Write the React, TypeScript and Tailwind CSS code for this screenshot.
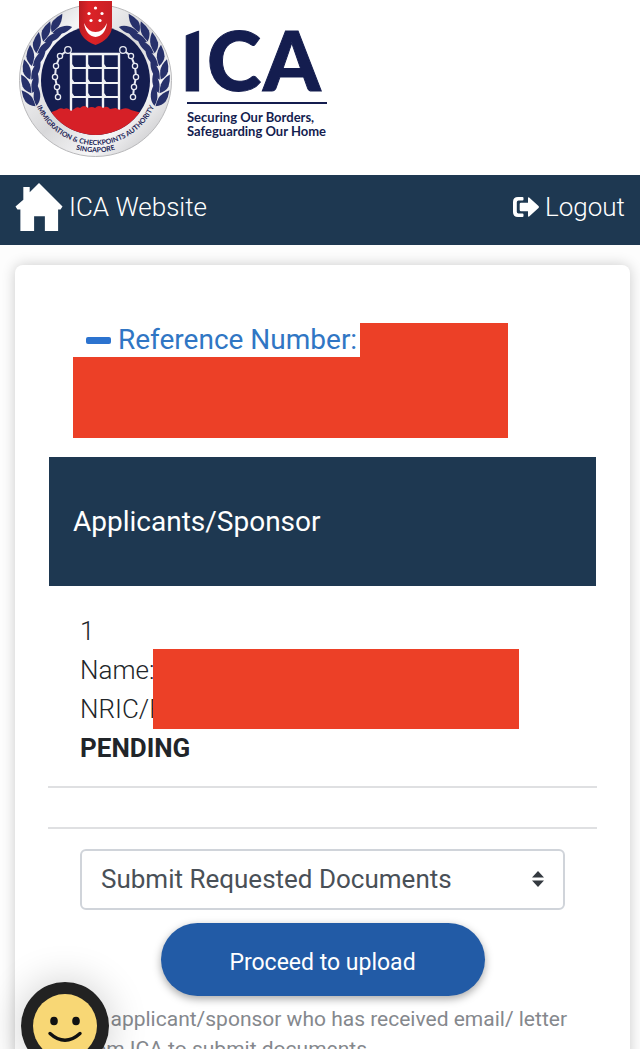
const LEAF_ANGLES = [-21, -9, 3, 15, 27, 39, 50];

const CHAIN_RINGS = [
  [68, 50],
  [60, 56],
  [56, 66],
  [55, 77],
  [57, 87],
  [58, 97],
];

const BAR_XS = [71, 87, 103, 119];
const RAIL_YS = [68, 83, 97];

function Laurel() {
  return (
    <g fill="#27316b">
      {LEAF_ANGLES.map((angle) => (
        <g key={angle} transform={`rotate(${angle} 95.5 80.5)`}>
          <path d="M30.300 83 Q24 80 22.500 75 Q21.500 70 23 63 Q29 68 30.300 74 Q31 79 30.300 83Z" />
          <path d="M31.300 83 Q30.500 76 32.500 72 Q35 66 39.500 64 Q40.500 71 38 76 Q35.500 81 31.300 83Z" />
        </g>
      ))}
    </g>
  );
}

function Chain() {
  return (
    <g fill="none" stroke="#e8eaf2">
      <polyline
        points={CHAIN_RINGS.map((p) => p.join(",")).join(" ")}
        strokeWidth="2"
      />
      {CHAIN_RINGS.map(([x, y], i) => (
        <circle key={y} cx={x} cy={y} r={i === 0 ? 3.3 : 2.6} fill="#141d4f" strokeWidth="1.3" />
      ))}
    </g>
  );
}

function Crest() {
  return (
    <svg viewBox="0 0 176 160" className="h-40 w-44 shrink-0" role="img" aria-label="Immigration and Checkpoints Authority crest">
      <defs>
        <linearGradient id="silver" x1="0" y1="0" x2="1" y2="1">
          <stop offset="0" stopColor="#c4c4c6" />
          <stop offset="0.25" stopColor="#f4f4f5" />
          <stop offset="0.5" stopColor="#d8d8da" />
          <stop offset="0.72" stopColor="#f6f6f7" />
          <stop offset="1" stopColor="#b4b4b7" />
        </linearGradient>
        <linearGradient id="shield" x1="0" y1="0" x2="1" y2="0">
          <stop offset="0" stopColor="#b81c22" />
          <stop offset="0.3" stopColor="#dd2227" />
          <stop offset="1" stopColor="#c92025" />
        </linearGradient>
        <clipPath id="disc">
          <circle cx="95.500" cy="80.500" r="54.500" />
        </clipPath>
        <path id="arc-upper" d="M37 107 A64 64 0 0 0 154 107" />
        <path id="arc-lower" d="M50 136 A71.500 71.500 0 0 0 141 136" />
      </defs>
      <circle cx="95.500" cy="80.500" r="76" fill="url(#silver)" stroke="#b9b9bb" strokeWidth="1" />
      <Laurel />
      <g transform="translate(191 0) scale(-1 1)">
        <Laurel />
      </g>
      <circle cx="95.500" cy="80.500" r="54.500" fill="#141d4f" />
      <g stroke="#f1f2f6" strokeWidth="2.400" fill="none">
        <path d="M70 54H120" />
        {BAR_XS.map((x) => (
          <path key={x} d={`M${x} 53V112`} />
        ))}
        {RAIL_YS.map((y) => (
          <path key={y} d={`M71 ${y}H119`} strokeWidth="1.800" />
        ))}
        {RAIL_YS.map((y) =>
          BAR_XS.slice(0, 3).map((x) => (
            <path key={`${x}-${y}`} d={`M${x} ${y - 4}L${x + 3} ${y}`} strokeWidth="1.500" />
          )),
        )}
      </g>
      <Chain />
      <g transform="translate(191 0) scale(-1 1)">
        <Chain />
      </g>
      <path
        clipPath="url(#disc)"
        fill="#d62027"
        d="M38 118 Q48 113 57 110 Q60 107 64 109 Q68 107 71 111 L74 109 Q77 106 80 108 Q84 104 88 108 Q92 106 95 108 Q99 104 103 108 Q107 105 110 109 L116 108 Q119 111 122 109 Q127 107 131 110 Q142 112 153 119 V140 H38Z"
      />
      <path d="M79 1H112V27Q111 39 95.500 45Q80 39 79 27Z" fill="url(#shield)" />
      <path d="M84 23Q86 36 95.500 37Q105 36 107 23Q103 32 95.500 32Q88 32 84 23Z" fill="#fff" />
      <g fill="#fff">
        <circle cx="95.500" cy="8" r="1.600" />
        <circle cx="89" cy="13.500" r="1.600" />
        <circle cx="102" cy="13.500" r="1.600" />
        <circle cx="91" cy="20.500" r="1.600" />
        <circle cx="100" cy="20.500" r="1.600" />
      </g>
      <g className="font-['Lato',sans-serif] font-bold" fill="#1b2355" textAnchor="middle">
        <text fontSize="7">
          <textPath href="#arc-upper" startOffset="50%">
            IMMIGRATION &amp; CHECKPOINTS AUTHORITY
          </textPath>
        </text>
        <text fontSize="7">
          <textPath href="#arc-lower" startOffset="50%">
            SINGAPORE
          </textPath>
        </text>
      </g>
    </svg>
  );
}

function Wordmark() {
  return (
    <svg viewBox="0 0 156 160" className="h-40 w-39 shrink-0" fill="#141d4f" role="img" aria-label="ICA, Securing Our Borders, Safeguarding Our Home">
      <g className="font-['Lato',sans-serif]">
        <text x="4 31 87" y="91" fontSize="82" fontWeight="900" stroke="#141d4f" strokeWidth="1">
          ICA
        </text>
        <rect x="11" y="102" width="140" height="2" />
        <g fontSize="13" fontWeight="700">
          <text x="11" y="122">Securing Our Borders,</text>
          <text x="11" y="136">Safeguarding Our Home</text>
        </g>
      </g>
      <path d="M8 28H24V30L8 36Z" fill="#fff" />
    </svg>
  );
}

function HouseIcon() {
  return (
    <svg viewBox="0 0 48 49" className="h-12 w-12 shrink-0" fill="#fff" aria-hidden="true">
      <path d="M24 0 L48 24 L46 27 H43.500 V49 H30 V34 H19 V49 H5 V27 H2 L0 24 L8 17 V4 H14.500 V9.500Z" />
    </svg>
  );
}

function LogoutIcon() {
  return (
    <svg viewBox="0 0 26 20" className="h-5 w-[26px] shrink-0" fill="#fff" aria-hidden="true">
      <path d="M5 0H9.500Q10.500 0 10.500 1V2.500Q10.500 3.500 9.500 3.500H5.500Q3.800 3.500 3.800 5.200V14.800Q3.800 16.500 5.500 16.500H9.500Q10.500 16.500 10.500 17.500V19Q10.500 20 9.500 20H5Q0 20 0 15V5Q0 0 5 0Z" />
      <path d="M15 1.500Q15 -0.500 16.700 0.900L25.500 9Q26.400 10 25.500 11L16.700 19.100Q15 20.500 15 18.500V14.300H8Q6.700 14.300 6.700 13V7Q6.700 5.700 8 5.700H15Z" />
    </svg>
  );
}

function Smiley() {
  return (
    <svg viewBox="0 0 88 88" className="size-22" aria-hidden="true">
      <circle cx="44" cy="44" r="44" fill="#222" />
      <circle cx="44" cy="44" r="32" fill="#f8d775" />
      <ellipse cx="33" cy="39" rx="3.800" ry="4.300" fill="#111" />
      <ellipse cx="55" cy="39" rx="3.800" ry="4.300" fill="#111" />
      <path d="M29 51.500Q44 65 59 51.500" fill="none" stroke="#111" strokeWidth="3.400" strokeLinecap="round" />
    </svg>
  );
}

export default function App() {
  return (
    <div className="flex h-screen flex-col overflow-hidden bg-[#fdfdfd] font-['Roboto',sans-serif] text-[#212529]">
      <header className="flex h-[175px] shrink-0 items-start bg-white">
        <Crest />
        <Wordmark />
      </header>

      <nav className="flex h-[70px] shrink-0 items-center justify-between bg-[#1e3851] px-[15px] pb-1.5 text-[26px] font-light text-white">
        <a href="#home" className="flex items-center gap-1.5">
          <HouseIcon />
          <span>ICA Website</span>
        </a>
        <a href="#logout" className="flex items-center gap-1.5">
          <LogoutIcon />
          Logout
        </a>
      </nav>

      <main className="mr-[10px] ml-[15px] mt-5 shrink-0 rounded-lg bg-white px-[34px] pt-[58px] pb-10 shadow-[0_0_14px_rgba(0,0,0,0.2)]">
        <section className="ml-6">
          <h1 className="flex h-[34px] items-center text-[28px] text-[#3076c4]">
            <span className="mr-[7px] ml-[13px] h-[7px] w-[25px] rounded-xs bg-[#2c73cf]" />
            <span className="w-[242px] whitespace-nowrap">Reference Number:</span>
            <span className="h-full w-[148px] bg-[#ec4027]" />
          </h1>
          <div className="h-[81px] w-[435px] bg-[#ec4027]" />
        </section>

        <h2 className="mt-[19px] flex h-[129px] items-center bg-[#1e3851] px-6 text-[28px] text-white">
          Applicants/Sponsor
        </h2>

        <section className="px-[31px] pt-[26px] pb-[18px] text-[26px] leading-[39px] font-light">
          <p>1</p>
          <div className="flex">
            <div className="w-[73px] overflow-hidden whitespace-nowrap">
              <p>Name:</p>
              <p>NRIC/F</p>
            </div>
            <div className="-mt-[2px] w-[366px] bg-[#ec4027]" />
          </div>
          <p className="font-bold">PENDING</p>
        </section>

        <div className="-mx-px h-[43px] border-y-2 border-[#dfe0e2]" />

        <form className="flex flex-col items-center px-[31px] pt-5" onSubmit={(e) => e.preventDefault()}>
          <div className="relative w-full">
            <select
              aria-label="Action"
              className="h-[61px] w-full appearance-none rounded-md border-2 border-[#d0d4da] bg-white px-[19px] text-[26px] text-[#495057]"
            >
              <option>Submit Requested Documents</option>
            </select>
            <svg
              viewBox="0 0 12 16"
              className="pointer-events-none absolute top-[22px] right-[21px] h-4 w-3"
              fill="#343a40"
              aria-hidden="true"
            >
              <path d="M6 0L12 6.500H0ZM6 16L0 9.500H12Z" />
            </svg>
          </div>
          <button
            type="submit"
            className="mt-[13px] h-[73px] w-[324px] rounded-full bg-[#225ba6] pt-2 text-[23px] text-white shadow-[0_3px_8px_rgba(0,0,0,0.35)]"
          >
            Proceed to upload
          </button>
          <div className="-mr-4 self-stretch pt-2">
            <p className="text-[21px] leading-[30px] text-[#85888d]">
              An applicant/sponsor who has received email/ letter from ICA to submit documents.
            </p>
          </div>
        </form>
      </main>

      <button
        type="button"
        aria-label="Open chat assistant"
        className="fixed -bottom-[21px] left-[21px] rounded-full shadow-[0_0_40px_rgba(0,0,0,0.2)]"
      >
        <Smiley />
      </button>
    </div>
  );
}
